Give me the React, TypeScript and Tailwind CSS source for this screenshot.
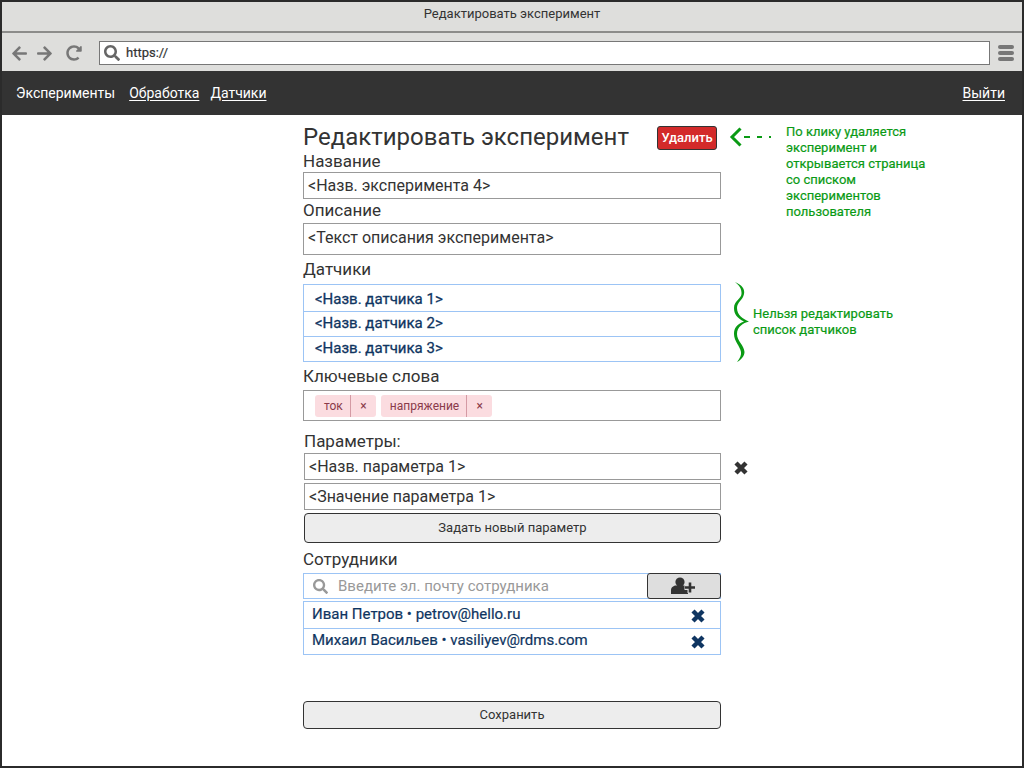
import { FaArrowLeft, FaArrowRight, FaRedoAlt, FaSearch } from 'react-icons/fa'

const sensors = ['<Назв. датчика 1>', '<Назв. датчика 2>', '<Назв. датчика 3>']

const staff = [
  'Иван Петров • petrov@hello.ru',
  'Михаил Васильев • vasiliyev@rdms.com',
]

function Label({ children, className = '' }: { children: string; className?: string }) {
  return <div className={`h-[20px] text-[17px] leading-[20px] text-[#333] ${className}`}>{children}</div>
}

function Field({ children, className = '' }: { children: string; className?: string }) {
  return (
    <div className={`flex items-center border border-[#999] bg-white pl-[4px] text-[16px] text-[#333] ${className}`}>
      {children}
    </div>
  )
}

function Tag({ children }: { children: string }) {
  return (
    <div className="flex h-[22px] items-center rounded-[3px] bg-[#fbdce0] text-[12px] text-[#8a3a4a]">
      <span className="flex h-full items-center border-r border-[#d49aa4] pl-[9px] pr-[7px]">{children}</span>
      <span className="w-[25px] text-center text-[12px]">×</span>
    </div>
  )
}

function Cross({ className = '' }: { className?: string }) {
  return (
    <svg width="14" height="14" viewBox="0 0 14 14" stroke="currentColor" strokeWidth="4.4" className={className}>
      <path d="M2 2 L12 12 M12 2 L2 12" />
    </svg>
  )
}

export default function App() {
  return (
    <div className="flex h-[768px] w-[1024px] flex-col overflow-hidden border-2 border-[#2b2b2b] bg-white font-['Roboto',sans-serif]">
      <div className="flex h-[31px] shrink-0 justify-center border-b-2 border-[#8c8c8a] bg-[#dededc] pt-[3px] text-[13px] leading-[18px] text-[#333]">
        Редактировать эксперимент
      </div>

      <div className="flex h-[38px] shrink-0 items-center bg-[#dededc] pl-[9px] pr-[8px] pt-[2px]">
        <FaArrowLeft size={17} className="text-[#777]" />
        <FaArrowRight size={17} className="ml-[8px] text-[#777]" />
        <FaRedoAlt size={16} className="ml-[13px] text-[#777]" />
        <div className="ml-[17px] flex h-[24px] flex-1 items-center border border-[#777] bg-white pl-[4px] text-[13px] text-[#333] [-webkit-text-stroke:0.2px_#333]">
          <FaSearch size={16} className="text-[#666]" />
          <span className="ml-[6px]">https://</span>
        </div>
        <div className="ml-[8px] flex w-[16px] flex-col gap-[2px]">
          <div className="h-[4px] rounded-full bg-[#777]" />
          <div className="h-[4px] rounded-full bg-[#777]" />
          <div className="h-[4px] rounded-full bg-[#777]" />
        </div>
      </div>

      <div className="flex h-[44px] shrink-0 items-center bg-[#333] pl-[14px] pr-[17px] text-[14px] text-white">
        <span>Эксперименты</span>
        <span className="ml-[14px] underline underline-offset-2">Обработка</span>
        <span className="ml-[11px] underline underline-offset-2">Датчики</span>
        <span className="ml-auto underline underline-offset-2">Выйти</span>
      </div>

      <div className="flex flex-1 pl-[301px]">
        <div className="w-[418px] shrink-0">
          <div className="mt-[8px] flex h-[28px] items-center">
            <h1 className="text-[24px] leading-[28px] text-[#333]">Редактировать эксперимент</h1>
            <button className="ml-[28px] mt-[1px] h-[24px] w-[60px] rounded-[3px] border border-[#333] bg-[#d32a2a] text-[13px] font-medium text-white">
              Удалить
            </button>
          </div>
          <Label>Название</Label>
          <Field className="mt-[1px] h-[27px]">{'<Назв. эксперимента 4>'}</Field>
          <Label className="mt-[1px]">Описание</Label>
          <Field className="mt-[3px] h-[32px] !items-start pt-[2px]">{'<Текст описания эксперимента>'}</Field>
          <Label className="mt-[4px]">Датчики</Label>
          <div className="mt-[5px] border border-[#9cc4f5]">
            {sensors.map((name, i) => (
              <div
                key={name}
                className={`flex items-center pl-[11px] text-[15px] text-[#0f3561] [-webkit-text-stroke:0.3px_#0f3561] ${i ? 'h-[25px] border-t border-[#9cc4f5] pb-[1px]' : 'h-[26px] pt-[2px]'}`}
              >
                {name}
              </div>
            ))}
          </div>
          <Label className="mt-[4px]">Ключевые слова</Label>
          <div className="mt-[4px] flex h-[31px] items-center gap-[5px] border border-[#999] pl-[11px]">
            <Tag>ток</Tag>
            <Tag>напряжение</Tag>
          </div>
          <Label className="ml-[1px] mt-[10px]">Параметры:</Label>
          <div className="ml-[1px]">
            <Field className="mt-[2px] h-[27px]">{'<Назв. параметра 1>'}</Field>
            <Field className="mt-[3px] h-[27px]">{'<Значение параметра 1>'}</Field>
            <button className="mt-[3px] h-[30px] w-full rounded-[4px] border border-[#333] bg-[#ededed] text-[13px] text-[#333]">
              Задать новый параметр
            </button>
          </div>
          <Label className="mt-[6px]">Сотрудники</Label>
          <div className="mt-[4px] flex h-[26px] items-center border border-[#9cc4f5] pl-[9px] text-[15px] text-[#999]">
            <FaSearch size={15} />
            <span className="ml-[10px]">Введите эл. почту сотрудника</span>
            <button className="ml-auto -mr-px flex h-[26px] w-[74px] items-center justify-center rounded-[3px] border border-[#333] bg-[#dedede] text-[#333]">
              <svg width="26" height="20" viewBox="0 0 26 20" fill="currentColor">
                <circle cx="9" cy="6" r="4.6" />
                <path d="M0 18 V14 C0 11 3 9.5 5 9.5 H13 C15 9.5 17 11 17 14 V18 Z" />
                <path d="M19 6 V17 M13.5 11.5 H24.5" fill="none" stroke="#dedede" strokeWidth="5" />
                <path d="M19 6.5 V16.5 M14 11.5 H24" fill="none" stroke="currentColor" strokeWidth="2.6" />
              </svg>
            </button>
          </div>
          <div className="mt-[2px] border border-[#9cc4f5]">
            {staff.map((person, i) => (
              <div
                key={person}
                className={`flex h-[26px] items-center justify-between pl-[8px] pr-[15px] text-[15px] text-[#0f3561] [-webkit-text-stroke:0.2px_#0f3561] ${i ? 'border-t border-[#9cc4f5]' : ''}`}
              >
                <span className="mb-[2px]">{person}</span>
                <Cross className="mt-[1px]" />
              </div>
            ))}
          </div>
          <button className="mt-[46px] h-[28px] w-full rounded-[4px] border border-[#333] bg-[#ededed] text-[13px] text-[#333]">
            Сохранить
          </button>
        </div>

        <div className="w-[280px] shrink-0 text-[13px] leading-[16px] text-[#0a9a14] [-webkit-text-stroke:0.2px_#0a9a14]">
          <div className="ml-[8px] mt-[9px] flex">
            <svg width="44" height="22" viewBox="0 0 44 22" fill="none" stroke="#0a9a14" className="mt-[2px] shrink-0">
              <path d="M11.5 2.5 L3 11 L11.5 19.5" strokeWidth="3" />
              <path d="M15 11 H21 M28 11 H33 M40 11 H42" strokeWidth="2" />
            </svg>
            <div className="ml-[13px] w-[145px]">
              По клику удаляется эксперимент и открывается страница со списком экспериментов пользователя
            </div>
          </div>
          <div className="ml-[13px] mt-[61px] flex items-center">
            <svg width="16" height="82" viewBox="0 0 16 82" fill="#0a9a14" className="shrink-0">
              <path d="M1 1 C8 4 11 8 10 13 C9 19 3 21 3 27 C3 34 9 38 15 40.5 C9 42 3 46 3 53 C3 60 10 64 10.5 71 C10.5 75 7 79 3 81 C6 77 7.5 74 7 71 C6 65 0 60 0 53 C0 47 3 43 10 40.5 C3 37 0 33 0 27 C0 20 7 18 7.5 13 C8 8 5 4 1 1 Z" />
            </svg>
            <div className="ml-[3px] w-[160px]">Нельзя редактировать список датчиков</div>
          </div>
          <Cross className="ml-[13px] mt-[98px] text-[#333]" />
        </div>
      </div>
    </div>
  )
}
